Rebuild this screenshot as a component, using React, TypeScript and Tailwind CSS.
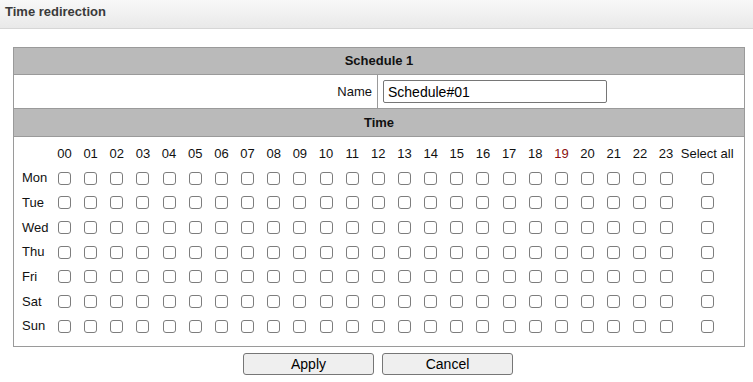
import { useState } from "react";

const HOURS = Array.from({ length: 24 }, (_, i) => String(i).padStart(2, "0"));
const DAYS = ["Mon", "Tue", "Wed", "Thu", "Fri", "Sat", "Sun"];

const Box = ({ checked, onChange }: { checked: boolean; onChange: () => void }) => (
  <input
    type="checkbox"
    checked={checked}
    onChange={onChange}
    className="m-0 size-[13px] appearance-none rounded-[3px] border border-[#7d7d7d] bg-white checked:bg-[#0075ff]"
  />
);

const App = () => {
  const [grid, setGrid] = useState<boolean[][]>(
    DAYS.map(() => HOURS.map(() => false)),
  );
  const [name, setName] = useState("Schedule#01");

  const toggle = (d: number, h: number) =>
    setGrid((g) => g.map((row, i) => (i === d ? row.map((v, j) => (j === h ? !v : v)) : row)));

  const toggleDay = (d: number) =>
    setGrid((g) => {
      const all = g[d].every(Boolean);
      return g.map((row, i) => (i === d ? row.map(() => !all) : row));
    });

  return (
    <div className="h-[382px] w-[753px] overflow-hidden bg-white font-['Liberation_Sans',Arial,sans-serif] text-[#111]">
      {/* title bar */}
      <div className="h-[29px] border-b border-[#d6d6d6] bg-gradient-to-b from-[#f8f8f8] to-[#e9e9e9] pl-[5px] pt-[2px] text-[13px] font-bold text-[#3a3a3a]">
        Time redirection
      </div>

      {/* schedule panel */}
      <div className="ml-[13px] mt-[18px] w-[732px] border border-[#9a9a9a]">
        <div className="flex h-[27px] items-center justify-center border-b border-[#9a9a9a] bg-[#bababa] text-[13px] font-bold">
          Schedule 1
        </div>

        <div className="flex h-[34px] border-b border-[#9a9a9a]">
          <div className="flex w-[364px] items-center justify-end border-r border-[#9a9a9a] pr-[5px] text-[13px]">
            Name
          </div>
          <div className="flex items-center pl-[5px]">
            <input
              value={name}
              onChange={(e) => setName(e.target.value)}
              className="h-[23px] w-[224px] rounded-[2px] border border-[#767676] px-[4px] text-[14px] text-black outline-none"
            />
          </div>
        </div>

        <div className="flex h-[28px] items-center justify-center border-b border-[#9a9a9a] bg-[#bababa] text-[13px] font-bold">
          Time
        </div>

        <div className="h-[209px] pl-[8px] pt-[4px] text-[13px]">
          <div className="grid grid-cols-[29.4px_repeat(24,26.17px)_56px] auto-rows-[24.7px] items-center">
            <div />
            {HOURS.map((h, i) => (
              <div key={h} className={i === 19 ? "text-center text-[#8a1010]" : "text-center"}>
                {h}
              </div>
            ))}
            <div className="text-center whitespace-nowrap">Select all</div>

            {DAYS.map((day, d) => (
              <div key={day} className="contents">
                <div>{day}</div>
                {HOURS.map((h, i) => (
                  <div key={h} className="flex justify-center">
                    <Box checked={grid[d][i]} onChange={() => toggle(d, i)} />
                  </div>
                ))}
                <div className="flex justify-center">
                  <Box checked={grid[d].every(Boolean)} onChange={() => toggleDay(d)} />
                </div>
              </div>
            ))}
          </div>
        </div>
      </div>

      {/* actions */}
      <div className="mt-[6px] flex justify-center gap-[8px] pl-[3px]">
        <button className="h-[22px] w-[131px] rounded-[3px] border border-[#767676] bg-[#efefef] text-[14px] text-black">
          Apply
        </button>
        <button className="h-[22px] w-[131px] rounded-[3px] border border-[#767676] bg-[#efefef] text-[14px] text-black">
          Cancel
        </button>
      </div>
    </div>
  );
};

export default App;
